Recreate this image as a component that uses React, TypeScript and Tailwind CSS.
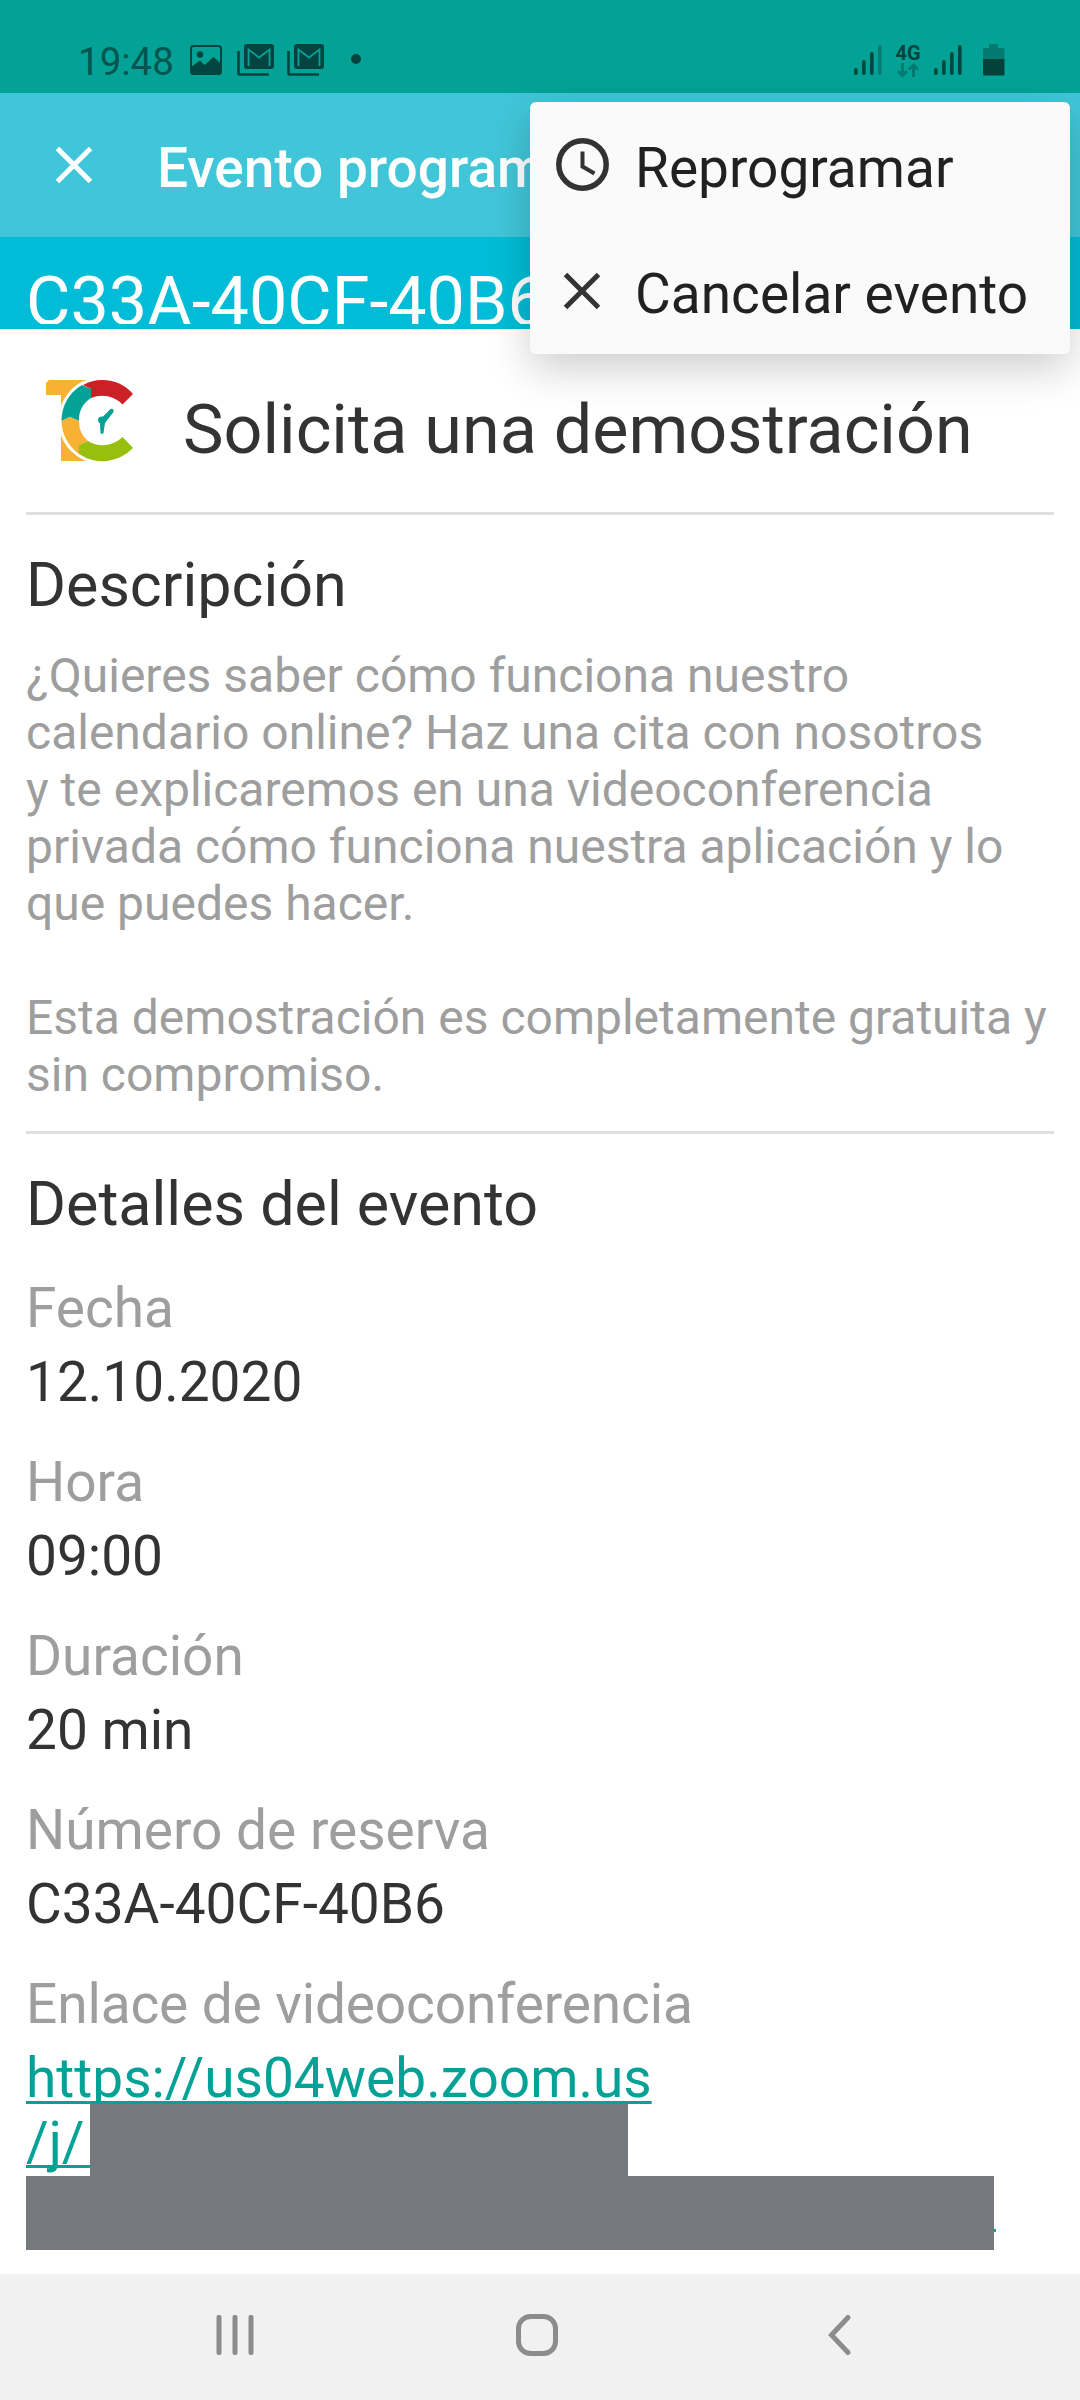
import React from 'react';

const details = [
  { label: 'Fecha', value: '12.10.2020' },
  { label: 'Hora', value: '09:00' },
  { label: 'Duración', value: '20 min' },
  { label: 'Número de reserva', value: 'C33A-40CF-40B6' },
];

const GmailIcon = () => (
  <svg width="38" height="32" viewBox="0 0 38 32">
    <path d="M1.5 7V29.5Q1.5 30.5 2.5 30.5H32" fill="none" stroke="#02443f" strokeWidth="2.6" />
    <rect x="7" y="0" width="30" height="25" rx="3" fill="#02443f" />
    <path d="M11.5 22V5.500L22 13.500L32.500 5.500V22" fill="none" stroke="#04a296" strokeWidth="1.8" />
  </svg>
);

const SignalIcon = ({ weak }: { weak?: boolean }) => (
  <svg width="28" height="32" viewBox="0 0 28 32" fill="#02443f">
    <rect x="0" y="24" width="3.600" height="7" rx="1.8" />
    <rect x="8" y="16" width="3.600" height="15" rx="1.8" />
    <rect x="16" y="8" width="3.600" height="23" rx="1.8" />
    <rect x="24" y="1" width="3.600" height="30" rx="1.8" opacity={weak ? 0.4 : 1} />
  </svg>
);

const CloseIcon = () => (
  <svg width="38" height="38" viewBox="0 0 38 38" fill="none" stroke="currentColor" strokeWidth="5">
    <path d="M2.500 2.500L35.500 35.500M35.500 2.500L2.500 35.500" />
  </svg>
);

const StatusBar = () => (
  <div className="flex h-[93px] items-start bg-[#04a296] pt-11 pr-[75px] pl-[78px] text-[#02443f]">
    <span className="mt-[-5px] w-28 text-[38.5px] leading-[45px] text-[#02564f]">19:48</span>
    <svg className="mt-px" width="32" height="30" viewBox="0 0 32 30">
      <rect x="1" y="1" width="30" height="28" rx="2.500" fill="none" stroke="#02443f" strokeWidth="2" />
      <circle cx="10" cy="9.500" r="3.200" fill="#02443f" />
      <path d="M1 22L10 15.500L14.500 20L23.500 12L31 18.500V29H1Z" fill="#02443f" />
    </svg>
    <div className="ml-[15px] flex gap-3">
      <GmailIcon />
      <GmailIcon />
    </div>
    <div className="mt-2.5 ml-[26px] h-2.5 w-2.5 rounded-full bg-[#02443f]" />
    <div className="ml-auto flex">
      <SignalIcon weak />
      <div className="ml-3.5 flex w-6 flex-col items-center">
        <span className="text-[20px] leading-[18px] font-bold">4G</span>
        <svg className="mt-px" width="22" height="15" viewBox="0 0 22 15" fill="none" stroke="#027a70" strokeWidth="3">
          <path d="M5.500 0V12M1 8L5.500 12.500L10 8M16.500 14V2M12 6.500L16.500 2L21 6.500" />
        </svg>
      </div>
      <div className="ml-3.5">
        <SignalIcon />
      </div>
      <svg className="ml-[21px]" width="22" height="32" viewBox="0 0 22 32">
        <path d="M6 0H15V4H20Q21.500 4 21.500 5.500V15H0V5.500Q0 4 1.500 4H6Z" fill="#027a70" />
        <path d="M0 15H21.500V30Q21.500 31.500 20 31.500H1.500Q0 31.500 0 30Z" fill="#02403a" />
      </svg>
    </div>
  </div>
);

const Logo = () => (
  <svg width="88" height="82" viewBox="0 0 88 82">
    <path d="M3 0H44V81H15V15H0V3Z" fill="#f7b236" />
    <ellipse cx="56" cy="40.500" rx="43.500" ry="43.500" fill="#fff" />
    <path d="M36 5A41 41 0 0 0 15.500 41L24 37L33 41A25 25 0 0 1 45 18V9Z" fill="#04a296" />
    <path d="M15.500 41A41 41 0 0 0 33 74V65L42 61A25 25 0 0 1 33 41L24 37Z" fill="#f7b236" />
    <path d="M37 5Q46 0 56 0A41 41 0 0 1 87 14L76.500 24.500A28 28 0 0 0 45 18V9Z" fill="#cc2027" />
    <path d="M33 65L42 61A28 28 0 0 0 76.500 57L87 68A42 42 0 0 1 33 74Z" fill="#97bf0d" />
    <path d="M64.500 29L57 36.500Q52 36 52 40Q52 42 54 43.500L54.500 53Q56 55 57.500 53L59 43L67.500 32Q68 28 64.500 29Z" fill="#04a296" />
  </svg>
);

const EventMenu = () => (
  <div className="absolute top-[102px] left-[530px] h-[252px] w-[540px] rounded-md bg-[#fafafa] pl-[26px] text-[55px] leading-[64px] text-[#212121] shadow-[0_14px_44px_rgba(0,0,0,0.2)]">
    <div className="flex h-[126px] items-center">
      <svg width="54" height="54" viewBox="0 0 54 54" fill="none" stroke="#333" strokeWidth="5.500">
        <circle cx="26.500" cy="26.500" r="23.700" />
        <path d="M26.500 13.500V28.500L38.500 35.500" strokeWidth="4" />
      </svg>
      <span className="mt-1.5 ml-[25px]">Reprogramar</span>
    </div>
    <div className="flex h-[126px] items-center">
      <span className="ml-[7px] text-[#333]">
        <CloseIcon />
      </span>
      <span className="mt-1.5 ml-[34px]">Cancelar evento</span>
    </div>
  </div>
);

const NavBar = () => (
  <div className="flex h-[126px] items-start bg-[#f1f1f1] pt-10 pl-[216px]">
    <svg width="38" height="42" viewBox="0 0 38 42" fill="#8c8c8c">
      <rect x="0.500" y="1" width="5" height="40" rx="2" />
      <rect x="16.500" y="1" width="5" height="40" rx="2" />
      <rect x="32.500" y="1" width="5" height="40" rx="2" />
    </svg>
    <svg className="ml-[262px]" width="42" height="42" viewBox="0 0 42 42">
      <rect x="2.500" y="2.500" width="37" height="37" rx="12" fill="none" stroke="#8c8c8c" strokeWidth="5" />
    </svg>
    <svg className="ml-[269px]" width="24" height="42" viewBox="0 0 24 42" fill="none" stroke="#8c8c8c" strokeWidth="5" strokeLinecap="round">
      <path d="M21 3.500L4.500 21L21 38.500" />
    </svg>
  </div>
);

const App = () => {
  return (
    <div className="relative flex h-[2400px] w-[1080px] flex-col overflow-hidden bg-white font-['Roboto',sans-serif] text-[#333]">
      <StatusBar />
      <div className="flex h-36 items-center bg-[#41c6d9] pl-[55px] text-white">
        <CloseIcon />
        <h1 className="mt-1.5 ml-16 text-[55px] leading-[64px] font-medium">Evento programado</h1>
      </div>
      <div className="h-[92px] bg-[#00bcd6]">
        <div className="h-[87px] overflow-hidden pt-[25px] pl-[26px] text-[68.25px] leading-[80px] text-white">C33A-40CF-40B6</div>
      </div>

      <main className="flex-1 px-[26px]">
        <div className="flex h-[183px] items-start pt-[51px] pl-5">
          <Logo />
          <h2 className="mt-2.5 ml-[49px] text-[68.25px] leading-[80px] whitespace-nowrap">Solicita una demostración</h2>
        </div>
        <hr className="border-t-[3px] border-[#e0e0e0]" />
        <h3 className="mt-[34px] text-[61px] leading-[72px]">Descripción</h3>
        <p className="mt-[26px] h-[484px] text-[48px] leading-[57px] whitespace-nowrap text-[#9e9e9e]">
          ¿Quieres saber cómo funciona nuestro<br />
          calendario online? Haz una cita con nosotros<br />
          y te explicaremos en una videoconferencia<br />
          privada cómo funciona nuestra aplicación y lo<br />
          que puedes hacer.<br />
          <br />
          Esta demostración es completamente gratuita y<br />
          sin compromiso.
        </p>
        <hr className="border-t-[3px] border-[#e0e0e0]" />
        <h3 className="mt-[34px] h-[103px] text-[61px] leading-[72px]">Detalles del evento</h3>
        {details.map((d) => (
          <div key={d.label} className="h-[174px] text-[55px]">
            <div className="leading-[74px] text-[#9e9e9e]">{d.label}</div>
            <div className="leading-[74px]">{d.value}</div>
          </div>
        ))}
        <div className="text-[55px] leading-[74px] tracking-[-0.12px] text-[#9e9e9e]">Enlace de videoconferencia</div>
        <div className="relative mt-[5px] text-[55px] leading-[64px] text-[#04a296]">
          <a href="#" className="underline decoration-[3px] underline-offset-4 [text-decoration-skip-ink:none]">
            https://us04web.zoom.us<br />/j/&nbsp;
          </a>
          {/* hidden meeting id */}
          <div className="absolute top-[58px] left-16 h-[72px] w-[538px] bg-[#75787c]" />
          <div className="absolute top-[130px] left-0 h-[74px] w-[968px] bg-[#75787c]" />
          <div className="absolute top-[183px] left-[968px] h-[3px] w-0.5 bg-[#04a296]" />
        </div>
      </main>

      <NavBar />
      <EventMenu />
    </div>
  );
};

export default App;
